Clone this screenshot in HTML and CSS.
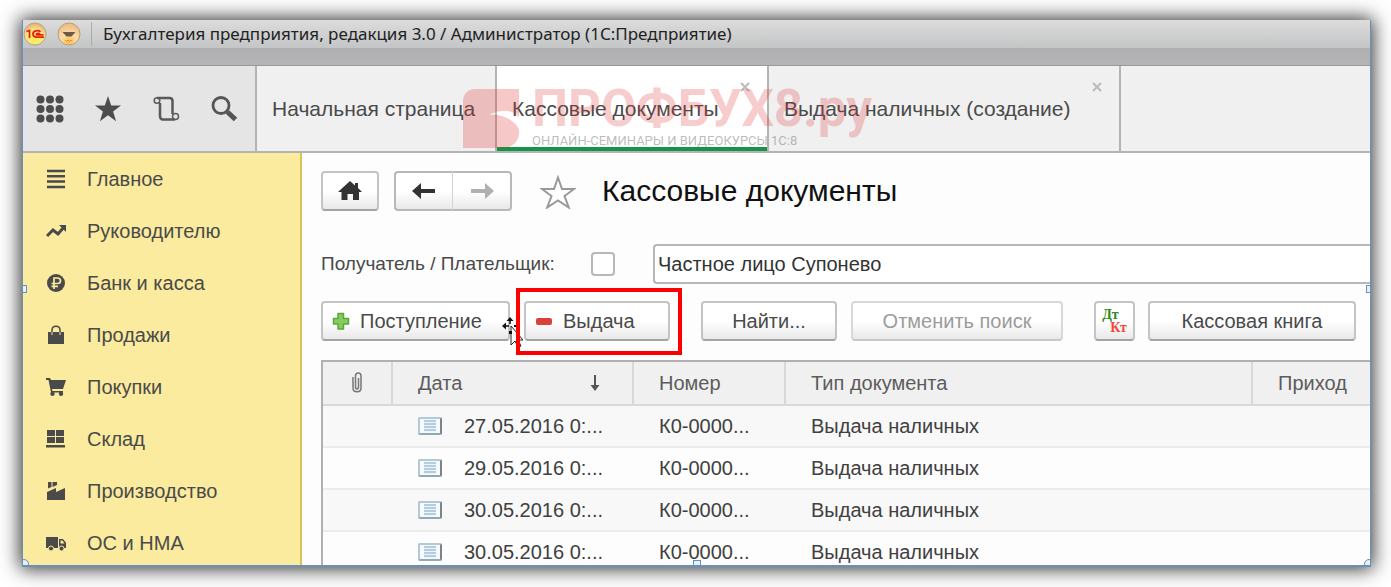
FILE: index.html
```
<!DOCTYPE html>
<html lang="ru">
<head>
<meta charset="utf-8">
<meta name="viewport" content="width=device-width, initial-scale=1">
<title>Кассовые документы</title>
<link rel="stylesheet" href="styles.css">
</head>
<body>

<div class="window">

<header class="titlebar">
  <svg class="round" viewBox="0 0 24 24">
    <defs>
      <radialGradient id="gold" cx="50%" cy="70%" r="65%">
        <stop offset="0" stop-color="#fff04c"/><stop offset="0.6" stop-color="#fde58a"/><stop offset="1" stop-color="#e2b878"/>
      </radialGradient>
      <radialGradient id="peach" cx="50%" cy="85%" r="75%">
        <stop offset="0" stop-color="#ffc04a"/><stop offset="0.5" stop-color="#fcdcae"/><stop offset="1" stop-color="#eebf82"/>
      </radialGradient>
    </defs>
    <circle cx="12" cy="12" r="11" fill="url(#gold)" stroke="#b9a184"/>
    <path d="M3.500 9.500L6.500 8.500v7.500M17.500 9.800c-2-1.800-7.500-1.600-7.500 2 0 2.600 2 3.400 4 3.400h7M17 12.200c-1-1-3.500-.9-3.500.1s1 .6 2 .6h5" fill="none" stroke="#e3200f" stroke-width="1.800"/>
  </svg>
  <svg class="round" viewBox="0 0 24 24">
    <circle cx="12" cy="12" r="11" fill="url(#peach)" stroke="#b99c78"/>
    <path d="M5.500 10h13l-4 4.500h-5z" fill="#6b5a45"/>
    <path d="M8 18l1.500 1.500L11 18l1.500 1.500L14 18l1.500 1.500" fill="none" stroke="#f08a2c"/>
  </svg>
  <span class="title">Бухгалтерия предприятия, редакция 3.0 / Администратор (1С:Предприятие)</span>
</header>

<nav class="tabs">
  <div class="tools">
    <button class="tool" aria-label="Меню">
      <svg width="28" height="28" viewBox="0 0 28 28" fill="#4d4d4d">
        <circle cx="4.500" cy="4.500" r="4"/><circle cx="14" cy="4.500" r="4"/><circle cx="23.500" cy="4.500" r="4"/>
        <circle cx="4.500" cy="14" r="4"/><circle cx="14" cy="14" r="4"/><circle cx="23.500" cy="14" r="4"/>
        <circle cx="4.500" cy="23.500" r="4"/><circle cx="14" cy="23.500" r="4"/><circle cx="23.500" cy="23.500" r="4"/>
      </svg>
    </button>
    <button class="tool" aria-label="Избранное">
      <svg width="28" height="28" viewBox="0 0 28 28" fill="#4d4d4d"><path d="M14 1l3.200 9.600H27l-7.900 6 3 9.700L14 20.300l-8.100 6 3-9.700-7.900-6h9.800z"/></svg>
    </button>
    <button class="tool" aria-label="История">
      <svg width="28" height="28" viewBox="0 0 28 28" fill="none" stroke="#5a5a5a">
        <path d="M5 3h12.500c2 0 3 1 3 3v13M8 8v13c0 2 1 3.500 3 3.500h12" stroke-width="2.500"/>
        <circle cx="5" cy="5.500" r="2.800" stroke-width="1.500"/><circle cx="23.500" cy="21.500" r="3" stroke-width="1.500"/>
      </svg>
    </button>
    <button class="tool" aria-label="Поиск">
      <svg width="28" height="28" viewBox="0 0 28 28" fill="none" stroke="#555">
        <circle cx="11" cy="10.500" r="8" stroke-width="2.800"/><path d="M17.500 17l8 7.500" stroke-width="5"/>
      </svg>
    </button>
  </div>
  <div class="tab tab-home"><a href="#">Начальная страница</a></div>
  <div class="tab tab-docs active">
    <a href="#">Кассовые документы</a>
    <button class="close" aria-label="Закрыть"><svg width="10" height="10" viewBox="0 0 10 10"><path d="M1 1l8 8M9 1l-8 8"/></svg></button>
  </div>
  <div class="tab tab-issue">
    <a href="#">Выдача наличных (создание)</a>
    <button class="close" aria-label="Закрыть"><svg width="10" height="10" viewBox="0 0 10 10"><path d="M1 1l8 8M9 1l-8 8"/></svg></button>
  </div>
  <div class="watermark">
    <svg width="57" height="59" viewBox="0 0 57 59">
      <path d="M12 0h44v29c-2-5-10-8-17-7-6 0-11 3-13 4 14-2 28 7 30 15 1 9-5 17-14 18H0V12C0 5 5 0 12 0z"/>
    </svg>
    <div>
      <div class="brand">ПРОФБУХ8.ру</div>
      <div class="slogan">ОНЛАЙН-СЕМИНАРЫ И ВИДЕОКУРСЫ 1С:8</div>
    </div>
  </div>
</nav>

<div class="body">

<aside class="sidebar">
  <a href="#"><svg viewBox="0 0 20 20"><path d="M1 2h18M1 7.300h18M1 12.600h18M1 18h18" stroke="#4a4a4a" stroke-width="2.500"/></svg>Главное</a>
  <a href="#"><svg viewBox="0 0 20 20"><path d="M1 15l6-6 5 4 6-7" fill="none" stroke="#4a4a4a" stroke-width="3"/><path d="M13 4h7v7z"/></svg>Руководителю</a>
  <a href="#"><svg viewBox="0 0 20 20"><circle cx="10" cy="10" r="9"/><path d="M8 16V5h3.500c4 0 4 5.500 0 5.500H5.500M5.500 13.300H12" fill="none" stroke="#fbeb9e" stroke-width="1.700"/></svg>Банк и касса</a>
  <a href="#"><svg viewBox="0 0 20 20"><path d="M2 7h16v12H2z"/><path d="M6 10V5c0-5 8-5 8 0v5" fill="none" stroke="#4a4a4a" stroke-width="1.500"/><path d="M6 7v3M14 7v3" stroke="#fbeb9e"/></svg>Продажи</a>
  <a href="#"><svg viewBox="0 0 20 20"><path d="M0 1h4l1 2h15l-3 9H6l.5 2H17v1.500H5L2.500 3H0z"/><circle cx="6.500" cy="16.800" r="2.200"/><circle cx="15" cy="16.800" r="2.200"/></svg>Покупки</a>
  <a href="#"><svg viewBox="0 0 20 20"><path d="M1 1h8v6H1zM10 1h8v6h-8zM1 8h8v6H1zM10 8h8v6h-8zM0 16h19v2.500H0z"/></svg>Склад</a>
  <a href="#"><svg viewBox="0 0 20 20"><path d="M1 19v-8l9-4v4l9-4v12zM2 1h3.500v5L2 7.500zM6.500 1H11v3L6.500 6z"/></svg>Производство</a>
  <a href="#"><svg viewBox="0 0 20 20"><path d="M0 4h12v11H0zM13 6h4l3.500 4.500V15H13z"/><path d="M14.500 7.500h2l2 3h-4z" fill="#fbeb9e"/><circle cx="5" cy="15.500" r="2.500" stroke="#fbeb9e"/><circle cx="15.500" cy="15.500" r="2.500" stroke="#fbeb9e"/></svg>ОС и НМА</a>
</aside>

<main class="content">
  <div class="heading">
    <button class="btn btn-home" aria-label="Домой">
      <svg width="24" height="22" viewBox="0 0 24 22" fill="#333"><path d="M12 1l5 4.500V3h3v5l4 4h-3v8h-6v-6H9.500v6H3.500v-8H0z"/></svg>
    </button>
    <div class="history">
      <button class="btn" aria-label="Назад"><svg width="24" height="18" viewBox="0 0 24 18"><path d="M0 9l9-8v6h14v4H9v6z" fill="#333"/></svg></button>
      <button class="btn" aria-label="Вперед" disabled><svg width="24" height="18" viewBox="0 0 24 18"><path d="M24 9l-9-8v6H1v4h14v6z" fill="#b0b0b0"/></svg></button>
    </div>
    <svg class="star" width="36" height="34" viewBox="0 0 36 34"><path d="M18 2.500l4 11.500h12l-9.500 7 4.300 11.500L18 25.500 7.200 32.500 11.500 21 2 14h12z" fill="#fff" stroke="#999" stroke-width="2"/></svg>
    <h1>Кассовые документы</h1>
  </div>

  <div class="filter">
    <label for="payer">Получатель / Плательщик:</label>
    <input type="checkbox" id="payer">
    <input type="text" class="payer-name" aria-label="Плательщик" value="Частное лицо Супонево">
  </div>

  <div class="commands">
    <button class="btn btn-in">
      <svg width="18" height="18" viewBox="0 0 18 18"><path d="M6 1.500h5.500V6.500H16.500V12H11.500v5H6v-5H1.500V6.500H6z" fill="#86cc5c" stroke="#5aa63c" stroke-width="1.500" stroke-linejoin="round"/></svg>
      Поступление
    </button>
    <div class="marked">
      <button class="btn btn-out">
        <svg width="18" height="18" viewBox="0 0 18 18"><rect x="1" y="6" width="16" height="7" rx="2" fill="#d8413c"/></svg>
        Выдача
      </button>
      <svg class="cursor" width="22" height="32" viewBox="0 0 22 32">
        <path d="M10 10v19l4-4 3 6 3-1-3-6h5z" fill="#fff" stroke="#222"/>
        <path d="M9 1l3.500 4h-7zM1 10l4-3.500v7zM4 9.300h4v1.500H4zM8.300 4h1.500v4H8.300zM8 15h3v3H8zM13 9h4v2h-4z" fill="#111"/>
      </svg>
      <div class="frame"></div>
    </div>
    <button class="btn btn-find">Найти...</button>
    <button class="btn btn-cancel" disabled>Отменить поиск</button>
    <button class="btn btn-dtkt" aria-label="Проводки"><span class="dt">Дт</span><span class="kt">Кт</span></button>
    <button class="btn btn-book">Кассовая книга</button>
  </div>

  <table class="list">
    <colgroup><col class="c-clip"><col class="c-date"><col class="c-num"><col class="c-type"><col class="c-sum"></colgroup>
    <thead>
      <tr>
        <th class="clip"><svg width="12" height="22" viewBox="0 0 12 22" fill="none" stroke="#777" stroke-width="1.500"><path d="M2 5v11c0 5 8 5 8 0V4c0-4-5.500-4-5.500 0v11c0 2.500 3 2.500 3 0V6"/></svg></th>
        <th><div class="sorted">Дата<svg width="10" height="18" viewBox="0 0 10 18"><path d="M5 1v13" stroke="#555" stroke-width="2"/><path d="M.5 11h9L5 17z" fill="#555"/></svg></div></th>
        <th>Номер</th>
        <th>Тип документа</th>
        <th>Приход</th>
      </tr>
    </thead>
    <tbody>
      <tr><td></td><td><div class="doc"><i></i>27.05.2016 0:...</div></td><td>К0-0000...</td><td>Выдача наличных</td><td></td></tr>
      <tr><td></td><td><div class="doc"><i></i>29.05.2016 0:...</div></td><td>К0-0000...</td><td>Выдача наличных</td><td></td></tr>
      <tr><td></td><td><div class="doc"><i></i>30.05.2016 0:...</div></td><td>К0-0000...</td><td>Выдача наличных</td><td></td></tr>
      <tr><td></td><td><div class="doc"><i></i>30.05.2016 0:...</div></td><td>К0-0000...</td><td>Выдача наличных</td><td></td></tr>
    </tbody>
  </table>
</main>

</div>

<span class="handle left"></span>
<span class="handle right"></span>
<span class="handle bottom"></span>
<span class="handle corner-left"></span>
<span class="handle corner-right"></span>
</div>

</body>
</html>
```
FILE: styles.css
```
* {
  box-sizing: border-box;
}

body {
  margin: 0;
  height: 100vh;
  padding: 20px;
  overflow: hidden;
  background: #fff;
  font-family: "Liberation Sans", Arial, sans-serif;
  font-size: 20px;
  color: #4a4a4a;
}

a {
  color: inherit;
  text-decoration: none;
}

button, input {
  font: inherit;
  color: inherit;
}

.window {
  position: relative;
  display: flex;
  flex-direction: column;
  height: 100%;
  overflow: hidden;
  border: 1px solid #6a8fb8;
  border-width: 0 1px 2px 1px;
  margin-left: 2px;
  background: #fdfdfd;
  box-shadow: 0 0 18px 2px #333;
}

/* title bar */
.titlebar {
  display: flex;
  flex: none;
  align-items: flex-start;
  height: 46px;
  padding-top: 2px;
  background: linear-gradient(#dcdcdc, #c4c5c6 28px, #b0b0b2 28px, #b4b4b6 45px, #999 45px);
}

.round {
  width: 24px;
  height: 24px;
  margin-right: 10px;
}

.title {
  padding-left: 11px;
  border-left: 1px solid #aaa;
  font-family: "Noto Sans", sans-serif;
  font-size: 17px;
  line-height: 24px;
  white-space: nowrap;
  color: #222;
}

/* tabs */
.tabs {
  position: relative;
  display: flex;
  flex: none;
  height: 87px;
  background: #f0f0f0;
  border-bottom: 2px solid #b4b4b4;
}

.tools {
  display: flex;
  flex: none;
  align-items: center;
  gap: 30px;
  width: 232px;
  padding-left: 13px;
  background: #e5e5e5;
}

.tool, .close {
  display: flex;
  padding: 0;
  border: 0;
  background: none;
}

.tab {
  display: flex;
  flex: none;
  align-items: center;
  justify-content: space-between;
  padding: 0 17px 0 15px;
  border-left: 2px solid #b4b4b4;
  font-size: 21px;
  white-space: nowrap;
}

.tab-home {
  width: 240px;
}

.tab-docs {
  width: 272px;
}

.tab-issue {
  width: 354px;
  border-right: 2px solid #b4b4b4;
}

.active {
  background: #fff;
  box-shadow: inset 0 -4px #159447;
}

.close {
  align-self: flex-start;
  margin-top: 16px;
}

.close path {
  stroke: #bbb;
  stroke-width: 2;
}

.watermark {
  position: absolute;
  left: 440px;
  top: 23px;
  display: flex;
  gap: 12px;
  white-space: nowrap;
  pointer-events: none;
}

.watermark svg {
  fill: rgba(220, 50, 50, 0.27);
}

.brand {
  font: bold 51px/40px Roboto, sans-serif;
  color: rgba(220, 50, 50, 0.25);
}

.slogan {
  font: 13px/24px Roboto, sans-serif;
  color: rgba(80, 80, 80, 0.4);
}

/* sections */
.body {
  display: flex;
  flex: 1;
  min-height: 0;
}

.sidebar {
  flex: none;
  width: 279px;
  overflow: hidden;
  background: #fbeb9e;
  border-right: 2px solid #d9c352;
}

.sidebar a {
  display: flex;
  align-items: center;
  gap: 21px;
  height: 52px;
  padding-left: 23px;
}

.sidebar svg {
  width: 20px;
  height: 20px;
  fill: #4a4a4a;
}

/* form */
.content {
  flex: 1;
  min-width: 0;
  padding: 18px 0 0 19px;
  overflow: hidden;
}

.btn {
  display: flex;
  align-items: center;
  justify-content: center;
  height: 40px;
  padding: 0;
  border: 2px solid #c4c4c4;
  border-bottom-color: #a4a4a4;
  border-radius: 4px;
  background: linear-gradient(#fff 50%, #e9e9e9);
  white-space: nowrap;
}

.btn:disabled {
  color: #9c9c9c;
  border-color: #d8d8d8;
  border-bottom-color: #c8c8c8;
}

.heading {
  display: flex;
  align-items: center;
}

.btn-home {
  width: 58px;
  margin-right: 15px;
}

.history {
  display: flex;
}

.history .btn {
  width: 59px;
  border-color: #b8b8b8;
}

.history .btn:first-child {
  border-right: 1px solid #d4d4d4;
  border-radius: 4px 0 0 4px;
}

.history .btn:last-child {
  border-left: 0;
  border-radius: 0 4px 4px 0;
}

.star {
  margin: 2px 26px 0 28px;
}

h1 {
  margin: 0;
  font-size: 30px;
  font-weight: normal;
  line-height: 38px;
  white-space: nowrap;
  color: #111;
}

.filter {
  display: flex;
  align-items: center;
  margin-top: 33px;
}

.filter label {
  width: 270px;
  font-size: 19px;
  white-space: nowrap;
}

.filter input[type=checkbox] {
  flex: none;
  width: 24px;
  height: 24px;
  margin: 0 38px 0 0;
  appearance: none;
  border: 2px solid #b8b8b8;
  border-radius: 4px;
  background: #fff;
}

.payer-name {
  flex: 1;
  min-width: 0;
  height: 40px;
  padding: 0 3px;
  border: 2px solid #b8b8b8;
  border-right: 0;
  border-radius: 4px 0 0 4px;
  background: #fff;
  color: #333;
}

.commands {
  display: flex;
  margin-top: 17px;
}

.btn-in, .btn-out {
  gap: 10px;
  justify-content: flex-start;
  padding-left: 9px;
}

.btn-in {
  width: 189px;
  margin-right: 14px;
}

.btn-out {
  width: 146px;
}

.btn-find {
  width: 136px;
  margin: 0 14px 0 31px;
}

.btn-cancel {
  width: 212px;
}

.btn-dtkt {
  flex-direction: column;
  width: 41px;
  margin: 0 13px 0 31px;
  font: bold 14px/13px "Liberation Serif", serif;
}

.dt {
  margin-right: 8px;
  color: #2f8a1c;
}

.kt {
  margin-left: 8px;
  color: #f4473c;
}

.btn-book {
  width: 208px;
}

.marked {
  position: relative;
}

.frame {
  position: absolute;
  inset: -13px -12px -14px -8px;
  border: 4px solid #f00;
  pointer-events: none;
}

.cursor {
  position: absolute;
  left: -23px;
  top: 15px;
}

/* document list */
.list {
  width: 100%;
  margin-top: 19px;
  table-layout: fixed;
  border-collapse: separate;
  border-spacing: 0;
  border-top: 2px solid #b0b0b0;
  border-left: 2px solid #b0b0b0;
}

.c-clip { width: 70px; }
.c-date { width: 241px; }
.c-num { width: 152px; }
.c-type { width: 467px; }

.list th {
  height: 44px;
  padding: 0 26px 0 25px;
  background: #f0f0f0;
  border-right: 2px solid #d8d8d8;
  border-bottom: 2px solid #d8d8d8;
  font-weight: normal;
  text-align: left;
  color: #5c5c5c;
}

.list th:last-child {
  padding-right: 0;
  border-right: 0;
}

.list .clip {
  padding: 0;
  text-align: center;
}

.clip svg {
  display: block;
  margin: 0 auto;
}

.list td {
  height: 42px;
  padding: 0 0 0 25px;
  border-bottom: 2px solid #ebebeb;
  white-space: nowrap;
  color: #404040;
}

.list tbody tr:nth-child(odd) {
  background: #f8f8f8;
}

.sorted {
  display: flex;
  align-items: center;
  justify-content: space-between;
  padding-right: 6px;
}

.doc {
  display: flex;
  align-items: center;
  gap: 22px;
}

.doc i {
  width: 24px;
  height: 18px;
  border: 2px solid #b4c8d6;
  border-right-color: #7d8388;
  border-bottom-color: #8fabb0;
  border-radius: 2px;
  background: repeating-linear-gradient(#b5cde0 0 2px, #eef5fa 2px 3px) center / 12px 12px no-repeat #f5fafd;
}

/* resize handles */
.handle {
  position: absolute;
  width: 8px;
  height: 8px;
  border: 1px solid #6a8fb8;
  background: #e3f1fa;
}

.left {
  left: -4px;
  top: 265px;
}

.right {
  right: -4px;
  top: 265px;
}

.bottom {
  left: 50%;
  bottom: -3px;
  margin-left: -4px;
}

.corner-left, .corner-right {
  width: 10px;
  height: 10px;
  bottom: -4px;
  border-radius: 50%;
}

.corner-left {
  left: -4px;
}

.corner-right {
  right: -4px;
}
```
